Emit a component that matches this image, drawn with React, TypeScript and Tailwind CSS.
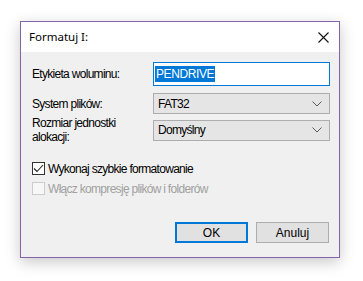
import React from 'react';

const Chevron: React.FC = () => (
  <svg width="10" height="6" viewBox="0 0 10 6" className="mr-[7px]">
    <path d="M0.5 0.5 L5 5 L9.5 0.5" fill="none" stroke="#5a5a5a" strokeWidth="1" />
  </svg>
);

const Select: React.FC<{ value: string }> = ({ value }) => (
  <div className="flex h-[21px] flex-1 items-center justify-between border border-[#adadad] bg-[#e5e5e5] pl-[4px]">
    <span>{value}</span>
    <Chevron />
  </div>
);

const App: React.FC = () => {
  return (
    <div className="h-[281px] w-[363px] overflow-hidden bg-white pt-[21px] pl-[20px] text-[12px] leading-[14px] tracking-[-0.7px] text-black [font-family:'Liberation_Sans',Arial,sans-serif]">
      <div className="flex h-[237px] w-[320px] flex-col border border-[#8464a8] bg-[#f0f0f0] shadow-[0_4px_14px_rgba(0,0,0,0.22)]">
        <div className="flex h-[30px] shrink-0 items-center justify-between bg-white pl-[8px] pr-[10px] text-[11.5px] tracking-normal [font-family:'Segoe_UI','Noto_Sans',sans-serif]">
          <span>Formatuj I:</span>
          <svg width="11" height="11" viewBox="0 0 11 11">
            <path d="M0.5 0.5 L10.5 10.5 M10.5 0.5 L0.5 10.5" stroke="#111" strokeWidth="1.1" />
          </svg>
        </div>

        <div className="flex flex-1 flex-col pt-[10px] pl-[11px] pr-[9px]">
          <div className="flex items-center">
            <div className="w-[121px]">Etykieta woluminu:</div>
            <div className="flex h-[24px] flex-1 items-center border border-[#0078d7] bg-white pl-[1px]">
              <span className="bg-[#0078d7] px-[1px] leading-[16px] tracking-[-0.4px] text-white">PENDRIVE</span>
            </div>
          </div>

          <div className="mt-[7px] flex items-center">
            <div className="w-[121px]">System plików:</div>
            <Select value="FAT32" />
          </div>

          <div className="mt-[2px] flex items-center">
            <div className="w-[121px]">
              Rozmiar jednostki
              <br />
              alokacji:
            </div>
            <Select value="Domyślny" />
          </div>

          <div className="mt-[18px] flex h-[13px] items-center gap-[3px]">
            <div className="flex h-[13px] w-[13px] items-center justify-center border border-[#333] bg-white">
              <svg width="11" height="9" viewBox="0 0 11 9">
                <path d="M1 4.5 L4 7.5 L10 1" fill="none" stroke="#222" strokeWidth="1.1" />
              </svg>
            </div>
            <span>Wykonaj szybkie formatowanie</span>
          </div>

          <div className="mt-[7px] flex h-[13px] items-center gap-[3px] text-[#a0a0a0]">
            <div className="h-[13px] w-[13px] border border-[#cccccc] bg-[#f7f7f7]" />
            <span>Włącz kompresję plików i folderów</span>
          </div>

          <div className="mt-[27px] flex justify-end gap-[8px] pr-[1px] tracking-normal">
            <div className="flex h-[21px] w-[73px] items-center justify-center border-2 border-[#0078d7] bg-[#e1e1e1]">
              OK
            </div>
            <div className="flex h-[21px] w-[73px] items-center justify-center border border-[#adadad] bg-[#e1e1e1]">
              Anuluj
            </div>
          </div>
        </div>
      </div>
    </div>
  );
};

export default App;
